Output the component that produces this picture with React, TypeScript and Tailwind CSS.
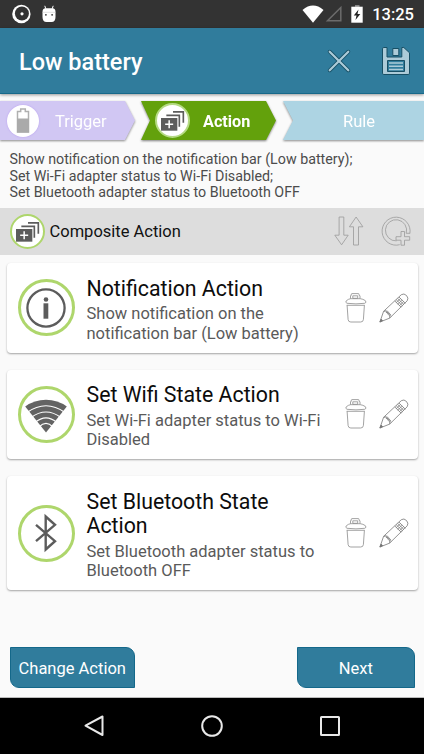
import type { ReactElement, ReactNode } from "react";

interface ActionItem {
  title: string;
  description: string;
  icon: ReactElement;
}

function CompositeIcon({ className }: Readonly<{ className?: string }>): ReactElement {
  return (
    <svg viewBox="0 0 105 105" className={className}>
      <rect x="18" y="45" width="49" height="38" fill="#5c5c5c" />
      <path d="M42.500 51.500v24M30.500 63.500h24" stroke="#fff" strokeWidth="4.500" />
      <path d="M34 37h39v34" fill="none" stroke="#5c5c5c" strokeWidth="5" />
      <path d="M54 26.500h31v33" fill="none" stroke="#5c5c5c" strokeWidth="5" />
    </svg>
  );
}

function InfoIcon(): ReactElement {
  return (
    <svg viewBox="0 0 56 56" className="size-full">
      <circle cx="28" cy="28" r="18.600" fill="none" stroke="#5c5c5c" strokeWidth="2.300" />
      <circle cx="28" cy="19.500" r="2.300" fill="#5c5c5c" />
      <path d="M25.500 23.300h4.800v15.400h-4.800z" fill="#5c5c5c" />
    </svg>
  );
}

function WifiIcon(): ReactElement {
  return (
    <svg viewBox="0 0 56 56" className="size-full">
      <path d="M7.200 20.500A35.500 35.500 0 0 1 48.800 20.500L28 46.500z" fill="#636363" />
      <g fill="none" stroke="#fff" strokeWidth="1.200">
        <path d="M9 26.500Q28 13 47 26.500" />
        <path d="M13 31.500Q28 20.500 43 31.500" />
        <path d="M17 36.500Q28 27.100 39 36.500" />
        <path d="M21 41Q28 34 35 41" />
      </g>
    </svg>
  );
}

function BluetoothIcon(): ReactElement {
  return (
    <svg viewBox="0 0 56 56" className="size-full">
      <path
        d="M18 19.800L37 36.200L27.700 44.500V11.500L37 19.800L18 36.200"
        fill="none"
        stroke="#5c5c5c"
        strokeWidth="2.400"
      />
    </svg>
  );
}

function TrashIcon(): ReactElement {
  return (
    <svg viewBox="0 0 22 30" className="h-[30px] w-[22px]" fill="none" stroke="#8c8c8c" strokeWidth="0.800">
      <path d="M5.500 5.700V3Q5.500 2.300 6.300 2.300V1.400Q6.300 .6 7 .6h6.500Q14 .6 14 1.400V2.300Q15 2.300 15 3V5.700" />
      <path d="M7.800 5.300V2.800h4.900v2.500z" />
      <path d="M5.500 5.700h9.800Q18 6 20.300 7.600Q22 9.500 19.800 10.300Q11 11.400 2 10.300Q-.2 9.500 1.500 7.600Q3.500 6 5.500 5.700z" />
      <path d="M1.700 12.300h18M2.100 12.300L3.100 26.500Q3.300 29 5.800 29h9.900q2.500 0 2.700-2.500l1-14.200" />
    </svg>
  );
}

function PencilIcon(): ReactElement {
  return (
    <svg viewBox="0 0 30 30" className="size-[30px]" fill="none" stroke="#777" strokeWidth="0.800">
      <path d="M.9 29L4.600 18.300L22.300 1.700Q25-.1 27.500 2.500Q30 5.200 28.200 7.800L10.700 25.100z" />
      <path d="M4.600 18.300Q6.200 17.700 7 19.300Q9 19.700 9.300 21.500Q11.400 22.500 10.700 25.100" />
      <path d="M6.300 17l5.700 6.500M8 17.600l4 4.600M15.800 8l6.400 6.200M17.200 6.700l6.400 6.200M18.600 5.400l6.400 6.200M20 4.100l6.400 6.200" />
      <path d="M17 9.800l4.600-4.300M18.600 11.300l4.600-4.300M20.200 12.800l4.600-4.300" strokeWidth="0.600" />
      <path d="M.9 29l1.200-3 1.600 1.700z" fill="#777" />
    </svg>
  );
}

function SortIcon(): ReactElement {
  return (
    <svg viewBox="0 0 30 30" className="size-[30px]" fill="none" stroke="#999" strokeWidth="0.800">
      <path d="M5.100 1h4.700v18.200h4.400L7.600 28.800L.8 19.200h4.300z" />
      <path d="M19.500 29h5V10.800h4.400L22.100 1l-6.700 9.800h4.100z" />
    </svg>
  );
}

function AddCircleIcon(): ReactElement {
  return (
    <svg viewBox="0 0 30 30" className="size-[30px]" fill="none" stroke="#999" strokeWidth="0.800">
      <path d="M18.700 28.700A14 14 0 1 1 28.900 17.500" />
      <path d="M15.500 24.900A10.600 10.600 0 1 1 25.200 17.300H28.900" />
      <path d="M20 15.500h3.500v5.200h5.200v3.500h-5.200v5h-3.500v-5h-5v-3.500h5z" fill="#ddd" />
    </svg>
  );
}

function CloseIcon(): ReactElement {
  return (
    <svg viewBox="0 0 24 24" className="size-6" fill="none" strokeLinecap="round">
      <path d="M2.700 2.700l18.600 18.600M21.300 2.700L2.700 21.300" stroke="#174f65" strokeWidth="3.800" />
      <path d="M2.700 2.700l18.600 18.600M21.300 2.700L2.700 21.300" stroke="#accbd8" strokeWidth="2.200" />
    </svg>
  );
}

function SaveIcon(): ReactElement {
  return (
    <svg viewBox="0 0 30 30" className="size-[30px]" stroke="#174f65" strokeWidth="1">
      <path
        d="M2.800 1.500H6V11h14.800V1.500h2l5.700 5.300v20.400q0 1.300-1.300 1.300H2.800q-1.300 0-1.300-1.300V2.800q0-1.300 1.300-1.300z"
        fill="#accbd8"
      />
      <path d="M11.800 2.500h6v7h-6z" fill="#accbd8" />
      <path d="M6.500 14.500h17v11h-17z" fill="#307c9c" />
      <path d="M8 17h14M8 20.200h14M8 23.400h14" stroke="#accbd8" strokeWidth="1.500" />
    </svg>
  );
}

const actions: ActionItem[] = [
  {
    title: "Notification Action",
    description: "Show notification on the\nnotification bar (Low battery)",
    icon: <InfoIcon />,
  },
  {
    title: "Set Wifi State Action",
    description: "Set Wi-Fi adapter status to Wi-Fi\nDisabled",
    icon: <WifiIcon />,
  },
  {
    title: "Set Bluetooth State\nAction",
    description: "Set Bluetooth adapter status to\nBluetooth OFF",
    icon: <BluetoothIcon />,
  },
];

function StatusBar(): ReactElement {
  return (
    <div className="flex h-7 items-center bg-[#333] pr-2.5 pl-3 text-white">
      <svg viewBox="0 0 20 20" className="size-5">
        <circle cx="9.400" cy="10" r="9.200" fill="#fff" />
        <circle cx="9.900" cy="9.500" r="7" fill="#333" />
        <circle cx="10" cy="9.800" r="1.600" fill="#fff" />
      </svg>
      <svg viewBox="0 0 16 18" className="ml-[9px] h-[18px] w-4">
        <path d="M3.800 .8l1 3M12.200 .8l-1 3" stroke="#fff" strokeWidth="1" />
        <path d="M1.500 6.800Q1.500 3.400 4.500 3.300h7q3 .1 3 3.500V12q0 5-4 5h-5q-4 0-4-5z" fill="#fff" />
        <path d="M1.500 7.300h13" stroke="#ccc" strokeWidth=".6" />
        <circle cx="4.900" cy="9.800" r=".9" fill="#333" />
        <circle cx="11.100" cy="9.800" r=".9" fill="#333" />
      </svg>
      <svg viewBox="0 0 22 18" className="ml-auto h-[18px] w-[22px]">
        <path d="M.5 5Q11-3.800 21.500 5L11 17.800z" fill="#fff" />
      </svg>
      <svg viewBox="0 0 18 18" className="ml-px size-[18px]">
        <path d="M2.500 15.800H15.800V2.500z" fill="none" stroke="#6c6c6c" strokeWidth="1.500" />
      </svg>
      <svg viewBox="0 0 12 18" className="ml-2 h-[18px] w-3">
        <path d="M4 0h4.500v2H4z" fill="#888" />
        <path d="M.3 1.700h11.400v16H.3z" fill="#fff" />
        <path d="M7.500 4.500L2.800 10.500h2.700L4.500 15l4.800-6H6.500z" fill="#222" />
      </svg>
      <span className="ml-[9px] pt-0.5 text-[16.500px] leading-7 font-medium">13:25</span>
    </div>
  );
}

function RoundBadge({ children, className }: Readonly<{ children: ReactNode; className: string }>): ReactElement {
  return <span className={`flex shrink-0 items-center justify-center rounded-full bg-white ${className}`}>{children}</span>;
}

function Steps(): ReactElement {
  return (
    <div className="mt-[7px] flex h-[39px] text-[16.5px] text-white">
      <div className="w-[135px] drop-shadow-[0_1px_1px_rgba(0,0,0,0.45)]">
        <div className="flex h-full items-center bg-[#d1c7f3] pl-[7px] [clip-path:polygon(0_0,125px_0,100%_50%,125px_100%,0_100%)]">
          <RoundBadge className="size-8 shadow-[0_0_2px_#b79cf0]">
            <svg viewBox="0 0 32 32" className="size-8">
              <path d="M10.500 27V6.500h3.200V4h4.600v2.500h3.200V27z" fill="#fff" stroke="#b0b0b0" strokeWidth="1.500" />
              <path d="M10 13.500h12V27.500H10z" fill="#aaa" />
            </svg>
          </RoundBadge>
          <span className="ml-4 pt-[3px]">Trigger</span>
        </div>
      </div>
      <div className="ml-1.5 w-[135px] drop-shadow-[0_1px_1px_rgba(0,0,0,0.5)]">
        <div className="flex h-full items-center bg-[#63a10c] pl-[14px] [clip-path:polygon(0_0,125px_0,100%_50%,125px_100%,0_100%,9px_50%)]">
          <RoundBadge className="size-[35px] border-2 border-[#b5da84]">
            <CompositeIcon className="size-[35px] shrink-0" />
          </RoundBadge>
          <span className="ml-[13px] pt-[3px] text-[16.200px] font-bold">Action</span>
        </div>
      </div>
      <div className="ml-[7px] flex-1 drop-shadow-[0_1px_1px_rgba(0,0,0,0.45)]">
        <div className="flex h-full items-center justify-center bg-[#add4e3] pt-[3px] pl-[11px] [clip-path:polygon(0_0,100%_0,100%_100%,0_100%,10px_50%)]">
          Rule
        </div>
      </div>
    </div>
  );
}

function ActionCard({ title, description, icon }: Readonly<ActionItem>): ReactElement {
  return (
    <li className="flex items-center rounded-[4px] bg-white pr-[8.500px] pl-[11px] shadow-[0_1px_2px_rgba(0,0,0,0.35)]">
      <RoundBadge className="size-[57px] border-[3px] border-[#aed66c]">
        <span className="size-14 shrink-0">{icon}</span>
      </RoundBadge>
      <div className="ml-3 flex-1 pt-[13.500px] pb-[9.500px] whitespace-pre">
        <h2 className="mb-[3px] text-[21.300px] leading-[24.500px] text-[#0c0c0c]">{title}</h2>
        <p className="text-[16.500px] leading-[19.500px] text-[#5a5a5a]">{description}</p>
      </div>
      <button type="button" aria-label="Delete">
        <TrashIcon />
      </button>
      <button type="button" aria-label="Edit" className="ml-3">
        <PencilIcon />
      </button>
    </li>
  );
}

export default function App(): ReactElement {
  return (
    <div className="flex h-[754px] w-[424px] flex-col overflow-hidden bg-[#fafafa] font-[Roboto,sans-serif]">
      <StatusBar />

      <header className="flex h-[66px] shrink-0 items-center border-b border-[#17698a] bg-[#307c9c] pr-[13px] pl-[19px] shadow-[0_1px_3px_rgba(0,0,0,0.4)]">
        <h1 className="pt-1 text-[23.500px] font-medium text-white">Low battery</h1>
        <button type="button" aria-label="Cancel" className="ml-auto">
          <CloseIcon />
        </button>
        <button type="button" aria-label="Save" className="ml-[30px]">
          <SaveIcon />
        </button>
      </header>

      <Steps />

      <p className="mt-[11px] pl-[9.500px] text-[14.250px] leading-[16.500px] whitespace-pre text-[#4c4c4c]">
        {
          "Show notification on the notification bar (Low battery);\nSet Wi-Fi adapter status to Wi-Fi Disabled;\nSet Bluetooth adapter status to Bluetooth OFF"
        }
      </p>

      <div className="mt-[7px] flex h-[47px] shrink-0 items-center bg-[#ddd] pr-[13px] pl-[9.500px]">
        <RoundBadge className="size-[35px] border-2 border-[#aed66c]">
          <CompositeIcon className="size-[35px] shrink-0" />
        </RoundBadge>
        <span className="ml-[5px] pt-[3px] text-[16.500px] text-[#111]">Composite Action</span>
        <button type="button" aria-label="Reorder" className="ml-auto">
          <SortIcon />
        </button>
        <button type="button" aria-label="Add" className="ml-[17px]">
          <AddCircleIcon />
        </button>
      </div>

      <ul className="mt-[8.500px] flex flex-col gap-[17px] px-[6.500px]">
        {actions.map((action) => (
          <ActionCard key={action.title} {...action} />
        ))}
      </ul>

      <div className="mt-auto flex justify-between border-b border-[#bbb] pr-[9.500px] pb-[9px] pl-[9.500px] text-[16.500px] text-white">
        <button type="button" className="h-[41px] w-[125.500px] rounded-tr-[9px] rounded-bl-[9px] border border-[#14688a] bg-[#307c9c] pt-[3px]">
          Change Action
        </button>
        <button type="button" className="h-[41px] w-[117.500px] rounded-tr-[9px] rounded-bl-[9px] border border-[#14688a] bg-[#307c9c] pt-[3px]">
          Next
        </button>
      </div>

      <nav className="flex h-14 shrink-0 items-center justify-center gap-[94px] bg-black">
        <svg viewBox="0 0 24 24" className="size-6">
          <path d="M20.500 2.500v18.500L3.500 11.700z" fill="none" stroke="#e8e8e8" strokeWidth="2" strokeLinejoin="round" />
        </svg>
        <svg viewBox="0 0 24 24" className="size-6">
          <circle cx="12" cy="12" r="9.800" fill="none" stroke="#e8e8e8" strokeWidth="2" />
        </svg>
        <svg viewBox="0 0 24 24" className="size-6">
          <rect x="3" y="3" width="18" height="18" rx=".5" fill="none" stroke="#e8e8e8" strokeWidth="2" />
        </svg>
      </nav>
    </div>
  );
}
